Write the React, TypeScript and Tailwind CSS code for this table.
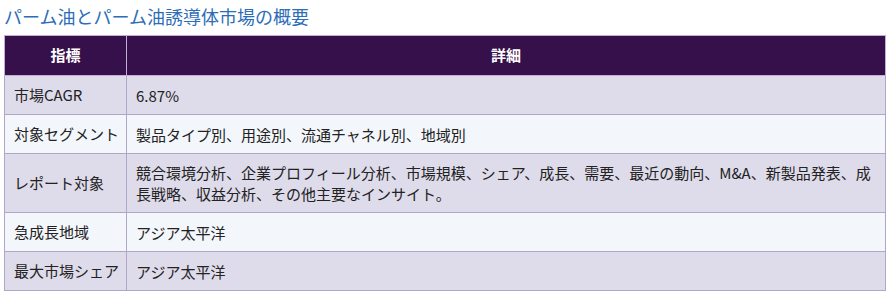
const ROWS: { label: string; value: string; shaded: boolean }[] = [
  { label: '市場CAGR', value: '6.87%', shaded: true },
  { label: '対象セグメント', value: '製品タイプ別、用途別、流通チャネル別、地域別', shaded: false },
  {
    label: 'レポート対象',
    value:
      '競合環境分析、企業プロフィール分析、市場規模、シェア、成長、需要、最近の動向、M&A、新製品発表、成長戦略、収益分析、その他主要なインサイト。',
    shaded: true,
  },
  { label: '急成長地域', value: 'アジア太平洋', shaded: false },
  { label: '最大市場シェア', value: 'アジア太平洋', shaded: true },
];

export default function App() {
  return (
    <div
      className="w-[894px] h-[298px] bg-white pl-[4px] pr-[8px] pt-[3px]"
      style={{ fontFamily: '"Noto Sans CJK JP", "Noto Sans", sans-serif' }}
    >
      <h2 className="text-[18px] leading-[26px] text-[#2d6db8] font-normal">
        パーム油とパーム油誘導体市場の概要
      </h2>

      <table className="mt-[6px] w-[882px] border-collapse table-fixed text-[15px] text-[#222]">
        <thead>
          <tr className="bg-[#36104a] text-white h-[40px]">
            <th className="w-[122px] border border-[#c4aed8] font-bold">指標</th>
            <th className="border border-[#c4aed8] font-bold">詳細</th>
          </tr>
        </thead>
        <tbody>
          {ROWS.map(row => (
            <tr key={row.label} className={row.shaded ? 'bg-[#dedbea]' : 'bg-[#f3f6fb]'}>
              <td className="border border-[#b0a7c8] pl-[9px] pr-[4px] py-[8px] leading-[22px] align-middle whitespace-nowrap">
                {row.label}
              </td>
              <td className="border border-[#b0a7c8] px-[9px] py-[8px] leading-[21px] align-middle">
                {row.value}
              </td>
            </tr>
          ))}
        </tbody>
      </table>
    </div>
  );
}
